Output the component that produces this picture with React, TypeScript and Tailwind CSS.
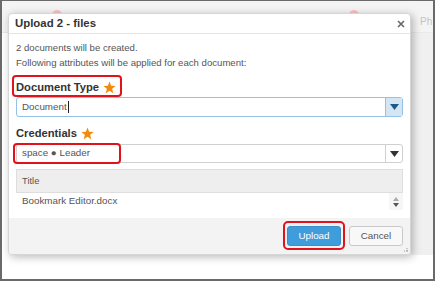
import React from 'react'

function Star() {
  return (
    <svg width="13" height="13" viewBox="0 0 24 24" className="ml-[4px] shrink-0">
      <path d="M12 1l3 7.6 8.2.6-6.3 5.3 2 8L12 18.2l-6.9 4.3 2-8L.8 9.2 9 8.6z" fill="#f28a0c" />
    </svg>
  )
}

function Caret({ color }: { color: string }) {
  return (
    <svg width="9" height="6" viewBox="0 0 9 6">
      <path d="M0 0h9L4.5 6z" fill={color} />
    </svg>
  )
}

export default function App() {
  return (
    <div className="relative w-[436px] h-[282px] bg-white overflow-hidden">
      <div className="relative w-[435px] h-[281px] border-2 border-t border-[#6a6a6a] bg-white overflow-hidden font-['Liberation_Sans',Arial,sans-serif]">
        {/* page behind the dialog */}
        <div className="flex h-full flex-col">
          <div className="relative h-[32px] shrink-0 bg-[#f4f4f4] border-b border-[#e9e9e9]">
            <span className="absolute left-[50px] top-[9px] w-[10px] h-[10px] rounded-full bg-[#f6c4c0]" />
            <span className="absolute left-[347px] top-[9px] w-[10px] h-[10px] rounded-full bg-[#f6c4c0]" />
            <span className="absolute left-[418px] top-[13px] text-[10px] text-[#c4c4c4]">Ph</span>
          </div>
          <div className="flex flex-1">
            <div className="flex-1" />
            <div className="w-[22px] h-[222px] bg-[#f0f0f0]" />
          </div>
        </div>

        {/* dialog */}
        <div className="absolute left-[6px] top-[12px] w-[403px] flex flex-col rounded-[4px] border border-[#d6d6d6] bg-white shadow-[2px_2px_8px_rgba(0,0,0,0.28)] overflow-hidden">
          <div className="flex h-[20px] items-center justify-between border-b border-[#e5e5e5] pl-[6px] pr-[5px]">
            <span className="text-[11.4px] font-bold text-[#333]">Upload 2 - files</span>
            <svg width="8" height="8" viewBox="0 0 8 8">
              <path d="M1 1l6 6M7 1L1 7" stroke="#666" strokeWidth="1.6" />
            </svg>
          </div>

          <div className="flex flex-col px-[7px] pt-[7px] pb-[8px]">
            <p className="text-[9.6px] leading-[14.5px] text-[#555]">2 documents will be created.</p>
            <p className="text-[9.6px] leading-[14.5px] text-[#555]">Following attributes will be applied for each document:</p>

            <div className="mt-[9px] flex h-[16px] items-center text-[11.2px] font-bold text-[#333]">
              Document Type
              <Star />
            </div>
            <div className="mt-[2px] flex h-[20px] rounded-[3px] border border-[#93c2e6] bg-white">
              <div className="flex flex-1 items-center pl-[5px] text-[9.8px] text-[#555]">
                Document<span className="ml-[1px] inline-block h-[12px] w-[1px] bg-[#222]" />
              </div>
              <div className="flex w-[17px] items-center justify-center border-l border-[#93c2e6] bg-[#d4e6f4]">
                <Caret color="#1d5a8c" />
              </div>
            </div>

            <div className="mt-[8px] flex h-[16px] items-center text-[11.2px] font-bold text-[#333]">
              Credentials
              <Star />
            </div>
            <div className="mt-[3px] flex h-[19px] rounded-[3px] border border-[#d0d0d0] bg-white">
              <div className="flex flex-1 items-center pl-[5px] text-[9.8px] text-[#555]">space ● Leader</div>
              <div className="flex w-[17px] items-center justify-center border-l border-[#d0d0d0]">
                <Caret color="#333" />
              </div>
            </div>

            <div className="mt-[6px] flex flex-col">
              <div className="flex h-[24px] items-center border border-[#dedede] bg-[#eeeeee] pl-[5px] text-[9.4px] text-[#555]">
                Title
              </div>
              <div className="flex h-[17px]">
                <div className="flex flex-1 items-center pl-[6px] text-[9.8px] text-[#555]">Bookmark Editor.docx</div>
                <div className="flex w-[14px] flex-col items-center justify-center gap-[2px] bg-[#f6f6f6]">
                  <svg width="6" height="4" viewBox="0 0 6 4"><path d="M0 4h6L3 0z" fill="#aaa" /></svg>
                  <svg width="6" height="4" viewBox="0 0 6 4"><path d="M0 0h6L3 4z" fill="#555" /></svg>
                </div>
              </div>
            </div>
          </div>

          <div className="relative flex h-[36px] items-center justify-end gap-[8px] bg-[#f3f3f3] pr-[7px]">
            <button className="h-[20px] w-[54px] rounded-[3px] border border-[#3a8fca] bg-[#3f9ddb] text-[9.8px] text-white">
              Upload
            </button>
            <button className="h-[20px] w-[54px] rounded-[3px] border border-[#c9c9c9] bg-[#f8f8f8] text-[9.8px] text-[#555]">
              Cancel
            </button>
            <svg width="4" height="4" viewBox="0 0 4 4" className="absolute right-[2px] bottom-[2px]">
              <path d="M3 0v1M0 3h1M3 3h1M3 2v1M2 3h1" stroke="#999" strokeWidth="1" />
            </svg>
          </div>
        </div>

        {/* red annotation boxes */}
        <div className="absolute left-[10px] top-[74px] h-[22px] w-[110px] rounded-[4px] border-2 border-[#e2121c]" />
        <div className="absolute left-[11px] top-[142px] h-[21px] w-[108px] rounded-[4px] border-2 border-[#e2121c]" />
        <div className="absolute left-[281px] top-[220px] h-[29px] w-[62px] rounded-[5px] border-2 border-[#e2121c]" />
      </div>
    </div>
  )
}
